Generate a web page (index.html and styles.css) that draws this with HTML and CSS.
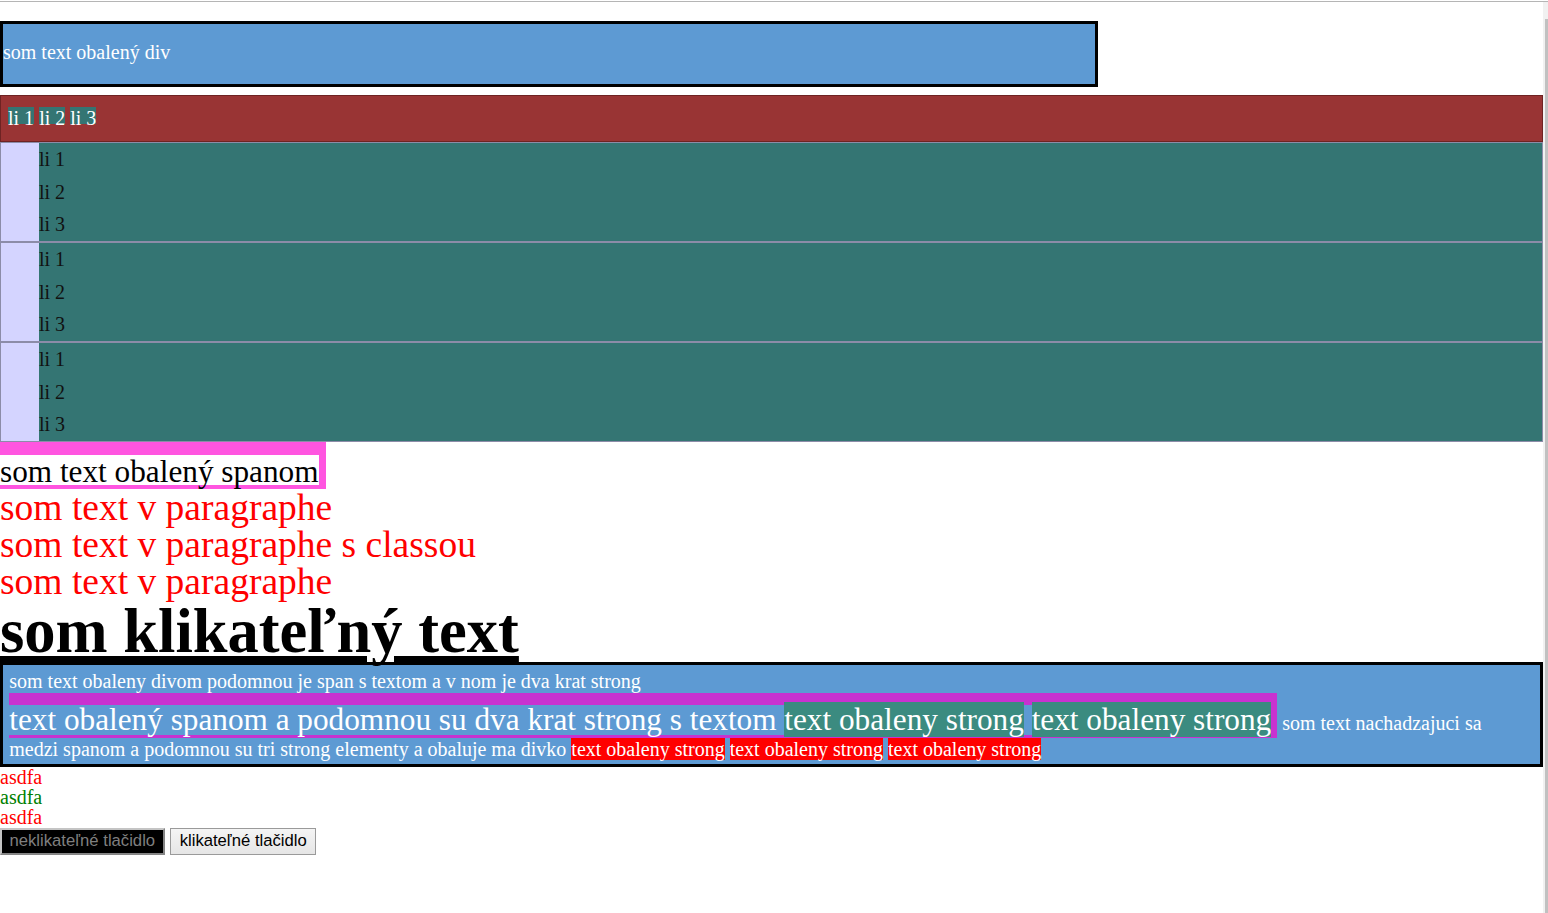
FILE: index.html
```html
<!DOCTYPE html>
<html lang="sk">
<head>
<meta charset="utf-8">
<title>Ukážka</title>
<link rel="stylesheet" href="styles.css">
</head>
<body>
<div class="page">
  <div class="topline"></div>
  <main class="content">
    <div class="box1">som text obalený div</div>
    <ul class="menu"><li>li 1</li><li>li 2</li><li>li 3</li></ul>
    <ul class="list"><li>li 1</li><li>li 2</li><li>li 3</li></ul>
    <ul class="list"><li>li 1</li><li>li 2</li><li>li 3</li></ul>
    <ul class="list"><li>li 1</li><li>li 2</li><li>li 3</li></ul>
    <span class="pink">som text obalený spanom</span>
    <p class="para">som text v paragraphe</p>
    <p class="para">som text v paragraphe s classou</p>
    <p class="para">som text v paragraphe</p>
    <div class="klik-wrap"><a class="klik" href="#">som klikateľný text</a></div>
    <div class="box2">
      <div>som text obaleny divom podomnou je span s textom a v nom je dva krat strong</div>
      <span class="purple">text obalený spanom a podomnou su dva krat strong s textom <strong class="teal">text obaleny strong</strong> <strong class="teal">text obaleny strong</strong></span> som text nachadzajuci sa medzi spanom a podomnou su tri strong elementy a obaluje ma divko <strong class="redbg">text obaleny strong</strong> <strong class="redbg">text obaleny strong</strong> <strong class="redbg">text obaleny strong</strong>
    </div>
    <div class="line c-red">asdfa</div>
    <div class="line c-green">asdfa</div>
    <div class="line c-red">asdfa</div>
    <div class="buttons">
      <button class="btn-dis" disabled>neklikateľné tlačidlo</button>
      <button class="btn">klikateľné tlačidlo</button>
    </div>
  </main>
  <div class="scrollbar"><div class="thumb"></div></div>
</div>
</body>
</html>
```
FILE: styles.css
```css
html, body {
  margin: 0;
  padding: 0;
  background: #ffffff;
}

body {
  font-family: "Liberation Serif", "Times New Roman", serif;
  font-size: 20px;
  color: #000;
}

.page {
  display: grid;
  grid-template-columns: 1543px 5px;
  grid-template-rows: auto 911px;
}

.topline {
  grid-column: 1 / -1;
  height: 1px;
  margin-top: 1px;
  background: #b5b5b5;
}

.content {
  min-width: 0;
}

.scrollbar {
  display: flex;
  background: #f1f1f1;
  padding: 17px 0 0 2px;
}

.thumb {
  flex: 1;
  background: #c1c1c1;
}

.box1 {
  margin-top: 19px;
  width: 1092px;
  border: 3px solid #000;
  background: #5d9ad3;
  color: #fff;
  padding: 17px 0 20px;
  line-height: 23px;
}

.menu {
  margin: 8px 0 0;
  padding: 11px 0 17px 7px;
  background: #993434;
  border: 1px solid #6e2323;
  list-style: none;
  display: flex;
  gap: 5px;
  align-items: flex-start;
}

.menu li {
  background: #347573;
  color: #fff;
  height: 17px;
  line-height: 22px;
}

.list {
  margin: 0;
  padding: 0 0 0 38px;
  list-style: none;
  background: #d4d4ff;
  border: 1px solid #8c8ca8;
}

.list li {
  background: #347573;
  color: #111;
  line-height: 32.67px;
}

.pink {
  display: block;
  width: fit-content;
  height: 30px;
  background: #fff;
  border-style: solid;
  border-color: #ff55e0;
  border-width: 13px 7px 4px 0;
  font-size: 31.25px;
  line-height: 34px;
  color: #000;
}

.para {
  margin: 0;
  color: #ff0000;
  font-size: 37.5px;
  line-height: 37px;
}

.klik-wrap {
  height: 62px;
  font-size: 62.5px;
  line-height: 62.5px;
  font-weight: bold;
}

.klik {
  color: #000;
  text-decoration: underline;
}

.box2 {
  border: 3px solid #000;
  background: #5d9ad3;
  color: #fff;
  padding: 5px 8px 2.5px 6.25px;
  line-height: 23px;
}

.purple {
  display: inline-block;
  border-style: solid;
  border-color: #c832d0;
  border-width: 12.5px 6.25px 3.75px 0;
  font-size: 31.25px;
  line-height: 30px;
}

strong {
  font-weight: normal;
}

.teal {
  background: #3b8b80;
}

.redbg {
  background: #ff0000;
}

.line {
  line-height: 20px;
}

.c-red {
  color: #ff0000;
}

.c-green {
  color: #008000;
}

.buttons {
  display: flex;
  gap: 5.3px;
  align-items: flex-start;
  padding-top: 1px;
}

.btn-dis,
.btn {
  font-family: "Liberation Sans", Arial, sans-serif;
  font-size: 16.67px;
  line-height: normal;
  margin: 0;
}

.btn-dis {
  background: #000;
  color: #7f7f7f;
  border-style: solid;
  border-width: 2.5px;
  border-color: #c4c4c4 #858585 #858585 #c4c4c4;
  padding: 1.7px 7.5px;
}

.btn {
  background: linear-gradient(#f4f4f4, #e6e6e6);
  color: #000;
  border: 1.25px solid #9a9a9a;
  padding: 2.9px 8.75px;
}
```
